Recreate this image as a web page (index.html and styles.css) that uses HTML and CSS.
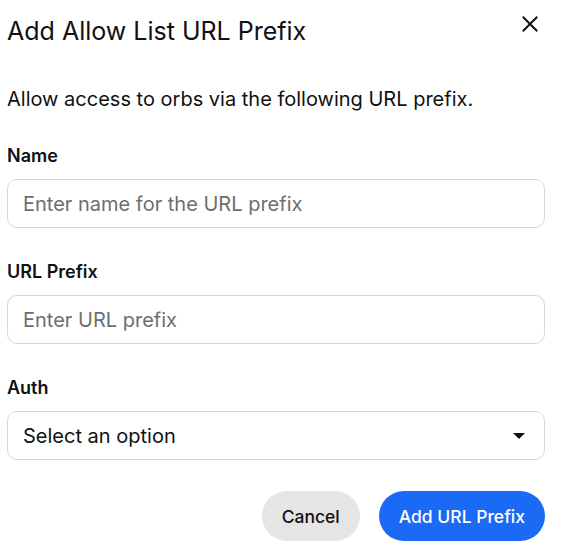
FILE: index.html
```html
<!DOCTYPE html>
<html lang="en">

<head>
    <meta charset="UTF-8">
    <meta name="viewport" content="width=device-width, initial-scale=1.0">
    <title>Add Allow List URL Prefix</title>

    <link rel="stylesheet" href="styles.css">

</head>

<body>
    <div class="dialog">
        <!-- Header -->
        <div class="dialog-header">
            <h1>Add Allow List URL Prefix</h1>
            <button class="close-btn" aria-label="Close">
                <svg width="16" height="16" viewBox="0 0 16 16">
                    <path d="M1.5 1.5 L14.5 14.5 M14.5 1.5 L1.5 14.5" stroke="#111" stroke-width="2" stroke-linecap="square" fill="none" />
                </svg>
            </button>
        </div>

        <p class="description">Allow access to orbs via the following URL prefix.</p>

        <!-- Fields -->
        <div class="field">
            <label for="name">Name</label>
            <input type="text" id="name" placeholder="Enter name for the URL prefix">
        </div>

        <div class="field">
            <label for="prefix">URL Prefix</label>
            <input type="text" id="prefix" placeholder="Enter URL prefix">
        </div>

        <div class="field">
            <label for="auth">Auth</label>
            <div class="select">
                <span>Select an option</span>
                <svg width="12" height="6" viewBox="0 0 12 6">
                    <path d="M0 0 H12 L6 6 Z" fill="#111" />
                </svg>
            </div>
        </div>

        <!-- Actions -->
        <div class="actions">
            <button class="btn btn-cancel">Cancel</button>
            <button class="btn btn-primary">Add URL Prefix</button>
        </div>
    </div>
</body>

</html>
```

FILE: styles.css
```css
body {
    margin: 0;
    font-family: 'Inter', sans-serif;
    color: #111;
    background: #fff;
}

.dialog {
    width: 538px;
    padding: 15px 0 0 7px;
}

/* Header */
.dialog-header {
    display: flex;
    justify-content: space-between;
    align-items: flex-start;
}

h1 {
    margin: 0;
    font-size: 25px;
    font-weight: 400;
    line-height: 32px;
}

.close-btn {
    background: none;
    border: none;
    padding: 0;
    margin: 1px 7px 0 0;
    width: 16px;
    height: 16px;
    cursor: pointer;
}

.close-btn svg {
    display: block;
}

.description {
    margin: 38px 0 0;
    font-size: 20px;
    line-height: 28px;
}

/* Fields */
.field {
    margin-top: 31px;
}

.field + .field {
    margin-top: 32px;
}

label {
    display: block;
    font-size: 18px;
    font-weight: 600;
    line-height: 24px;
    margin-bottom: 11px;
}

input,
.select {
    box-sizing: border-box;
    width: 538px;
    height: 49px;
    padding: 0 15px;
    border: 1px solid #d6d6d6;
    border-radius: 10px;
    font-family: 'Inter', sans-serif;
    font-size: 20px;
    color: #111;
    outline: none;
}

input::placeholder {
    color: #6e6e6e;
}

.select {
    display: flex;
    align-items: center;
    justify-content: space-between;
    padding-right: 19px;
}

/* Actions */
.actions {
    display: flex;
    justify-content: flex-end;
    gap: 19px;
    margin-top: 31px;
}

.btn {
    height: 50px;
    border: none;
    border-radius: 25px;
    padding: 0 20px;
    font-family: 'Inter', sans-serif;
    font-size: 17.5px;
    font-weight: 500;
    cursor: pointer;
}

.btn-cancel {
    background: #e5e5e5;
    color: #111;
}

.btn-primary {
    background: #1b6af5;
    color: #fff;
}
```
